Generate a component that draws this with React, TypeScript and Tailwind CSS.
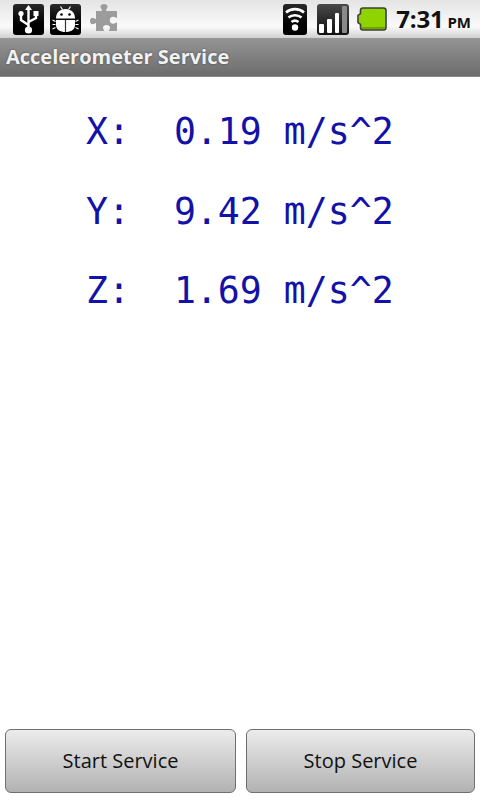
const sans = "font-['Open_Sans','Noto_Sans',sans-serif]";

function Badge({ children, wide = true }: { children: React.ReactNode; wide?: boolean }) {
  return (
    <div
      className={`flex h-[31px] items-center justify-center rounded-[3px] bg-gradient-to-b from-[#2a2a2a] to-black ${
        wide ? "w-[31px]" : "w-[24px]"
      }`}
    >
      {children}
    </div>
  );
}

function UsbIcon() {
  return (
    <svg width="23" height="29" viewBox="0 0 23 29" fill="none" stroke="#fff" strokeWidth="2.4">
      <path d="M11.5 4V24" />
      <path d="M11.5 20L4 15V10" />
      <path d="M11.5 17L19 13V10" />
      <path d="M11.5 0L15 5H8Z" fill="#fff" stroke="none" />
      <circle cx="4" cy="8.5" r="2.6" fill="#fff" stroke="none" />
      <rect x="16.5" y="6" width="5" height="5" fill="#fff" stroke="none" />
      <circle cx="11.5" cy="25" r="3.6" fill="#fff" stroke="none" />
    </svg>
  );
}

function AndroidBugIcon() {
  return (
    <svg width="27" height="27" viewBox="0 0 27 27" fill="none">
      <path d="M4 12.5C4 6.5 8 3 13.5 3S23 6.5 23 12.5Z" fill="#fff" />
      <path d="M4 14H23V19C23 23.5 19 26 13.5 26S4 23.5 4 19Z" fill="#fff" />
      <path d="M13.5 14V26" stroke="#333" strokeWidth="1.2" />
      <path d="M8.5 0.5L10.5 3.5M18.5 0.5L16.5 3.5" stroke="#fff" strokeWidth="1.2" />
      <circle cx="9.5" cy="8.5" r="1.3" fill="#000" />
      <circle cx="17.5" cy="8.5" r="1.3" fill="#000" />
      <path d="M0.5 14L3.5 15.5M0.5 18.5H3.5M0.5 23L3.5 21.5M26.5 14L23.5 15.5M26.5 18.5H23.5M26.5 23L23.5 21.5" stroke="#fff" strokeWidth="1.2" />
    </svg>
  );
}

function PuzzleIcon() {
  return (
    <svg width="28" height="30" viewBox="0 0 28 30" className="ml-[3px]">
      <path
        d="M6 7H12C12 5 10.5 4.5 10.5 2.8C10.5 1 12 0 14 0S17.5 1 17.5 2.8C17.5 4.5 16 5 16 7H27V14C25.5 14 25 12.8 23 12.8S19.8 14.3 19.8 16.3S21 19.8 23 19.8S25.5 18.6 27 18.6V27H19C19 25.5 20 25 20 23.6C20 22 18.4 21 16.5 21S13 22 13 23.6C13 25 14 25.5 14 27H6V19C4.5 19 4.2 20.3 2.6 20.3C1 20.3 0 18.9 0 17S1 13.7 2.6 13.7C4.2 13.7 4.5 15 6 15Z"
        fill="#9c9c9c"
      />
    </svg>
  );
}

function WifiIcon() {
  return (
    <svg width="20" height="25" viewBox="0 0 20 25" fill="none" stroke="#fff" strokeWidth="2.6">
      <path d="M1 5.5C6 1 14 1 19 5.5" />
      <path d="M3.5 10.5C7 7.5 13 7.5 16.5 10.5" />
      <path d="M6.5 15C8.5 13.5 11.5 13.5 13.5 15" />
      <circle cx="10" cy="20.5" r="3.2" fill="#fff" stroke="none" />
    </svg>
  );
}

function SignalIcon() {
  return (
    <div className="flex h-[31px] w-[32px] items-end gap-[3px] rounded-[3px] bg-gradient-to-b from-[#4a4a4a] to-[#111] p-[2px]">
      <div className="h-[9px] w-[5px] rounded-[1px] bg-white" />
      <div className="h-[14px] w-[5px] rounded-[1px] bg-white" />
      <div className="h-[20px] w-[5px] rounded-[1px] bg-white" />
      <div className="h-[27px] w-[5px] rounded-[1px] bg-[#8a8a8a]" />
    </div>
  );
}

function BatteryIcon() {
  return (
    <svg width="30" height="24" viewBox="0 0 30 24">
      <path
        d="M6 1H26.5C28 1 29 2 29 3.5V20.5C29 22 28 23 26.5 23H6C4.5 23 3.5 22 3.5 20.5V17.5L1 15.5V8.5L3.5 6.5V3.5C3.5 2 4.5 1 6 1Z"
        fill="#8fd400"
        stroke="#3d3d3d"
        strokeWidth="1.6"
      />
      <path d="M5 20H28V20.5C28 21.5 27.5 22 26.5 22H6C5.5 22 5 21.5 5 20.5Z" fill="#6fa300" />
    </svg>
  );
}

function ReadingRow({ axis, value }: { axis: string; value: string }) {
  return (
    <div className="h-[79.5px] whitespace-pre leading-[79.5px]">
      {`${axis}:  ${value} m/s^2`}
    </div>
  );
}

function ServiceButton({ label, className }: { label: string; className: string }) {
  return (
    <button
      className={`h-[64px] rounded-[6px] border border-[#6f6f6f] bg-gradient-to-b from-[#ececec] to-[#b2b2b2] text-[20px] text-[#111] ${className}`}
    >
      {label}
    </button>
  );
}

export default function App() {
  return (
    <div className={`flex h-[800px] w-[480px] flex-col bg-white ${sans}`}>
      <div className="flex h-[38px] items-center bg-gradient-to-b from-[#e4e4e4] via-[#fafafa] via-70% to-[#d0d0d0] pl-[13px] pr-[9px]">
        <div className="flex items-center gap-[6px]">
          <Badge>
            <UsbIcon />
          </Badge>
          <Badge>
            <AndroidBugIcon />
          </Badge>
          <PuzzleIcon />
        </div>
        <div className="ml-auto flex items-center">
          <Badge wide={false}>
            <WifiIcon />
          </Badge>
          <div className="ml-[10px]">
            <SignalIcon />
          </div>
          <div className="ml-[8px]">
            <BatteryIcon />
          </div>
          <div className="ml-[9px] flex items-baseline gap-[4px] whitespace-nowrap font-bold leading-none text-[#111]">
            <span className="text-[24px] tracking-[-0.2px]">7:31</span>
            <span className="text-[15px]">PM</span>
          </div>
        </div>
      </div>

      <div className="flex h-[39px] items-center border-b border-[#8a8a8a] bg-gradient-to-b from-[#959595] to-[#6c6c6c] pl-[6px] text-[20px] font-bold text-[#f2f2f2] [text-shadow:0_0_2px_rgba(0,0,0,0.5)]">
        Accelerometer Service
      </div>

      <div className="flex-1 pl-[86px] pt-[15px] font-['DejaVu_Sans_Mono',monospace] text-[36.5px] text-[#1212a8]">
        <ReadingRow axis="X" value="0.19" />
        <ReadingRow axis="Y" value="9.42" />
        <ReadingRow axis="Z" value="1.69" />
      </div>

      <div className="flex justify-between px-[5px] pb-[7px]">
        <ServiceButton label="Start Service" className="w-[231px]" />
        <ServiceButton label="Stop Service" className="w-[229px]" />
      </div>
    </div>
  );
}
